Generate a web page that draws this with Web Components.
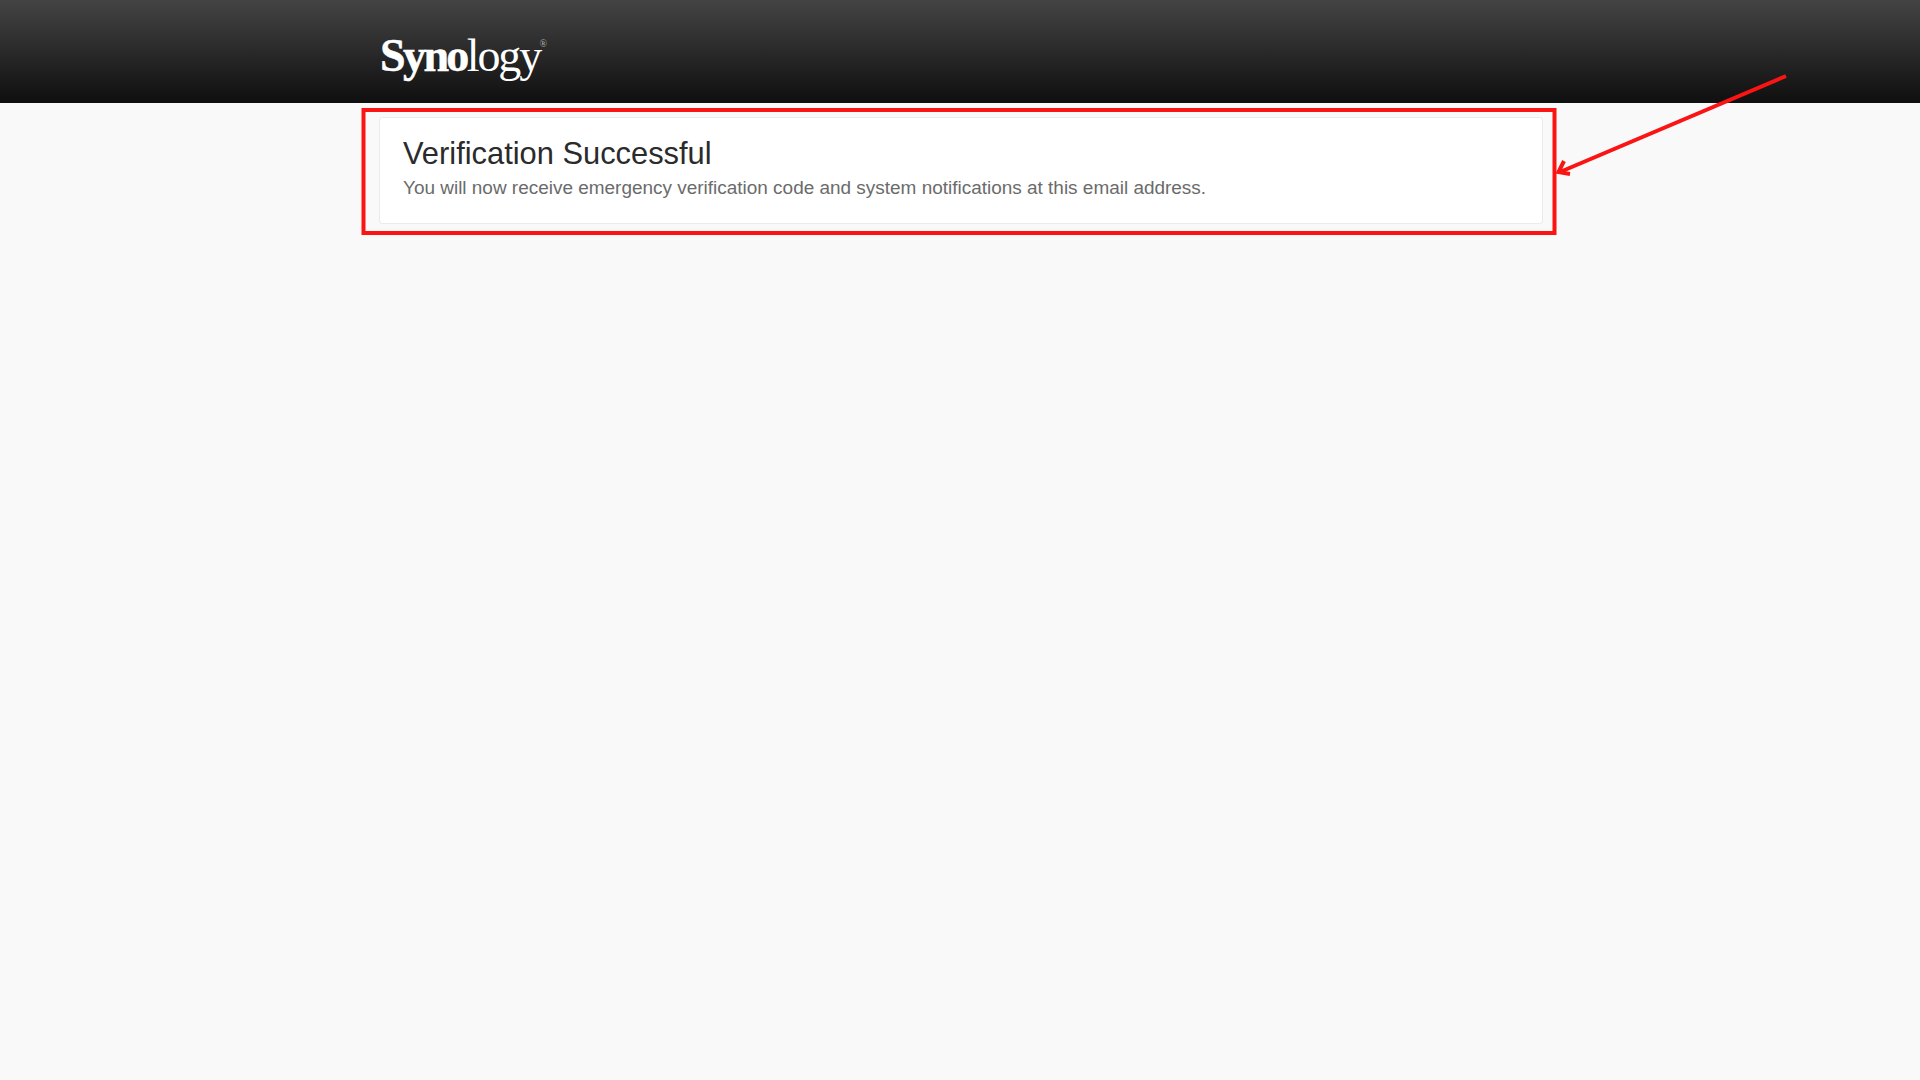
<!DOCTYPE html>
<html>
<head>
<meta charset="utf-8">
<title>Verification Successful</title>
<style>
    html, body { margin: 0; height: 100%; }
    body {
        background: #f9f9f9;
        font-family: "Liberation Sans", Arial, sans-serif;
        height: 1080px;
        overflow: hidden;
    }
</style>
</head>
<body>
<syno-header></syno-header>
<syno-page>
    <syno-card heading="Verification Successful">You will now receive emergency verification code and system notifications at this email address.</syno-card>
</syno-page>
<red-markup></red-markup>

<script>
class SynoHeader extends HTMLElement {
    connectedCallback() {
        this.attachShadow({ mode: 'open' });
        this.shadowRoot.innerHTML = `
            <style>
                :host {
                    display: block;
                    height: 103px;
                    box-sizing: border-box;
                    padding: 33px 0 0 380px;
                    background: linear-gradient(180deg, #444444 0%, #0f0f0f 100%);
                }
                .logo {
                    display: inline-block;
                    position: relative;
                    color: #ffffff;
                    font-family: "Liberation Serif", "Times New Roman", serif;
                    font-size: 46px;
                    line-height: 46px;
                    letter-spacing: -2.1px;
                }
                .logo b {
                    font-weight: bold;
                    letter-spacing: -2.6px;
                    -webkit-text-stroke: 0.5px #ffffff;
                }
                .logo sup {
                    position: absolute;
                    top: 7px;
                    right: -7px;
                    font-size: 10px;
                    line-height: 8px;
                    letter-spacing: 0;
                    color: #b0b0b0;
                }
            </style>
            <div class="logo"><b>Syno</b>logy<sup>®</sup></div>
        `;
    }
}

class SynoPage extends HTMLElement {
    connectedCallback() {
        this.attachShadow({ mode: 'open' });
        this.shadowRoot.innerHTML = `
            <style>
                :host {
                    display: block;
                    box-sizing: border-box;
                    width: 1164px;
                    margin: 14px 0 0 379px;
                }
            </style>
            <slot></slot>
        `;
    }
}

class SynoCard extends HTMLElement {
    connectedCallback() {
        this.attachShadow({ mode: 'open' });
        this.shadowRoot.innerHTML = `
            <style>
                :host {
                    display: block;
                    box-sizing: border-box;
                    height: 107px;
                    padding: 16px 23px 0;
                    background: #ffffff;
                    border: 1px solid #ebebeb;
                    border-radius: 3px;
                }
                h1 {
                    margin: 0;
                    font-size: 30.85px;
                    font-weight: normal;
                    line-height: 40px;
                    color: #2b2b2b;
                }
                p {
                    margin: 0;
                    font-size: 18.97px;
                    line-height: 28px;
                    color: #6b6b6b;
                }
            </style>
            <h1>${this.getAttribute('heading')}</h1>
            <p><slot></slot></p>
        `;
    }
}

// Red box and arrow drawn on top of the screenshot
class RedMarkup extends HTMLElement {
    connectedCallback() {
        this.attachShadow({ mode: 'open' });
        this.shadowRoot.innerHTML = `
            <style>
                :host { display: block; }
                svg { position: absolute; left: 0; top: 0; pointer-events: none; }
            </style>
            <svg width="1920" height="1080" viewBox="0 0 1920 1080" fill="none" stroke="#fa1414">
                <rect x="363.5" y="110" width="1191" height="123" stroke-width="4"/>
                <path d="M1786 76L1560 172" stroke-width="4"/>
                <path d="M1564 161L1558.5 172L1570 174" stroke-width="4"/>
            </svg>
        `;
    }
}

customElements.define('syno-header', SynoHeader);
customElements.define('syno-page', SynoPage);
customElements.define('syno-card', SynoCard);
customElements.define('red-markup', RedMarkup);
</script>
</body>
</html>
